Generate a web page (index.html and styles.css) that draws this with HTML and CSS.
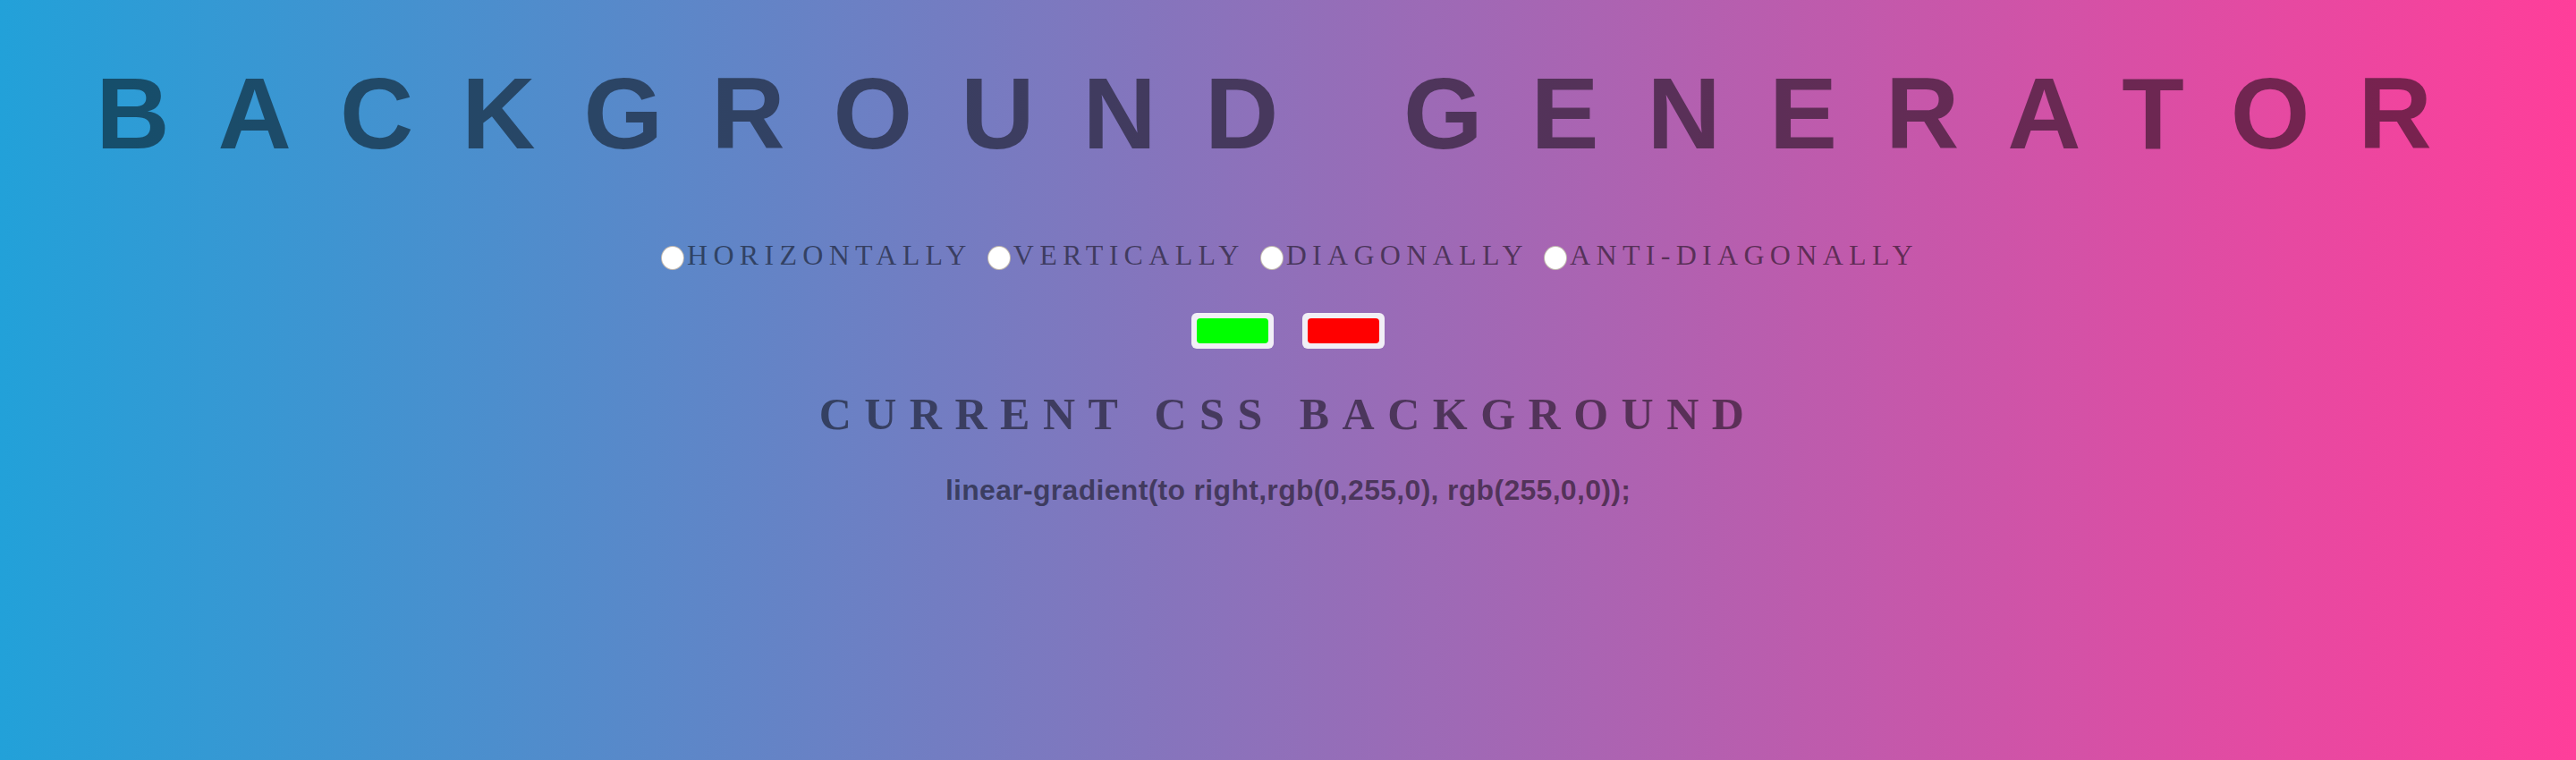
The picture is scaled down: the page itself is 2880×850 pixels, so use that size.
FILE: index.html
```html
<!DOCTYPE html>
<html lang="en">
<head>
<meta charset="utf-8">
<title>Background Generator</title>
<link rel="stylesheet" href="styles.css">
</head>
<body class="page">
<h1 class="title">BACKGROUND GENERATOR</h1>
<div class="directions">
<label class="direction"><input type="radio" name="direction" class="radio">HORIZONTALLY</label>
<label class="direction"><input type="radio" name="direction" class="radio">VERTICALLY</label>
<label class="direction"><input type="radio" name="direction" class="radio">DIAGONALLY</label>
<label class="direction"><input type="radio" name="direction" class="radio">ANTI-DIAGONALLY</label>
</div>
<div class="pickers">
<input type="color" class="picker" value="#00ff00">
<input type="color" class="picker" value="#ff0000">
</div>
<h3 class="current-title">CURRENT CSS BACKGROUND</h3>
<p class="css-value">linear-gradient(to right,rgb(0,255,0), rgb(255,0,0));</p>
</body>
</html>
```
FILE: styles.css
```css
html {
  height: 100%;
}

.page {
  margin: 0;
  min-height: 100%;
  background: linear-gradient(to right, #22a1d9, #ff3e9a);
  text-align: center;
  color: rgba(0, 0, 0, 0.5);
}

.title {
  margin: 70px 0 0;
  font-family: "Liberation Sans", Arial, sans-serif;
  font-weight: bold;
  font-size: 114px;
  line-height: 114px;
  letter-spacing: 54px;
}

.directions {
  margin-top: 81px;
  font-family: "Liberation Serif", "Times New Roman", serif;
  font-size: 32px;
  line-height: 40px;
  letter-spacing: 6.3px;
}

.direction {
  display: inline;
}

.radio {
  -webkit-appearance: none;
  appearance: none;
  display: inline-block;
  box-sizing: border-box;
  width: 26px;
  height: 27px;
  margin: 0 3px 0 4px;
  border: 1px solid rgba(150, 135, 120, 0.6);
  border-radius: 50%;
  background: #ffffff;
  vertical-align: -6px;
}

.pickers {
  margin-top: 45px;
  display: flex;
  justify-content: center;
  gap: 32px;
}

.picker {
  -webkit-appearance: none;
  appearance: none;
  box-sizing: border-box;
  width: 92px;
  height: 40px;
  margin: 0;
  padding: 6px;
  border: none;
  border-radius: 6px;
  background: #f1eff6;
  cursor: pointer;
}

.picker::-webkit-color-swatch-wrapper {
  padding: 0;
}

.picker::-webkit-color-swatch {
  border: none;
  border-radius: 4px;
}

.current-title {
  margin: 43px 0 0;
  font-family: "Liberation Serif", "Times New Roman", serif;
  font-weight: bold;
  font-size: 50px;
  line-height: 60px;
  letter-spacing: 14.5px;
}

.css-value {
  margin: 35px 0 0;
  font-family: "Liberation Sans", Arial, sans-serif;
  font-weight: bold;
  font-size: 32px;
  line-height: 40px;
  letter-spacing: 0.3px;
}
```
